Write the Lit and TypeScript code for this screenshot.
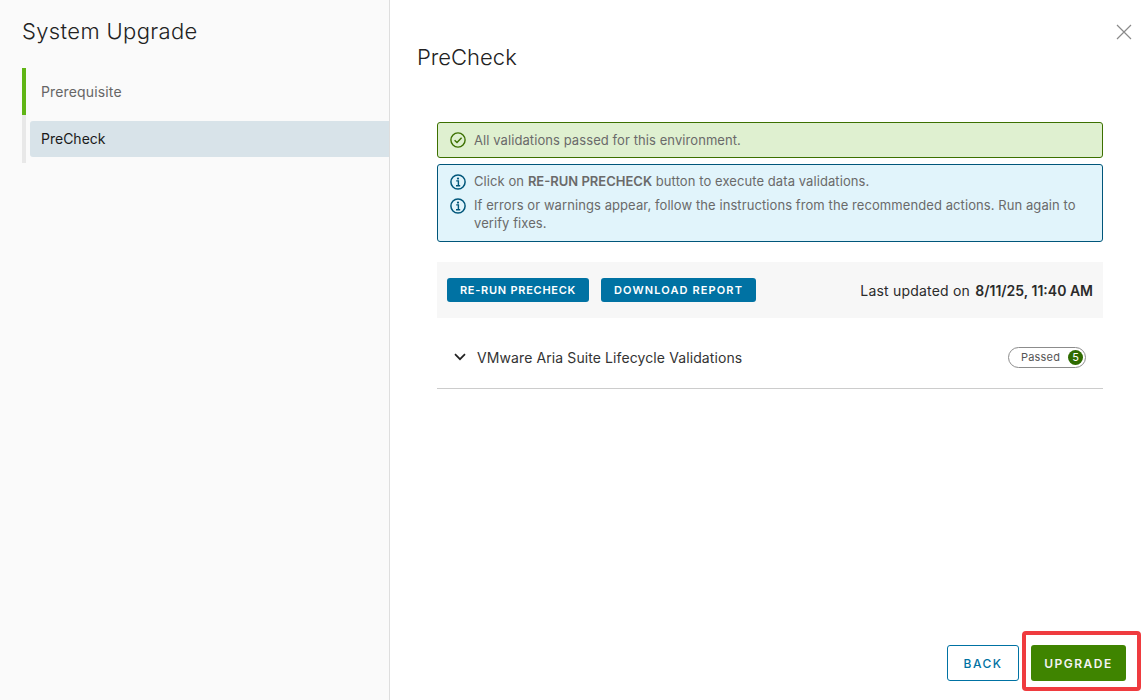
import { LitElement, html, css, svg } from "lit";
import { customElement } from "lit/decorators.js";

const infoIcon = svg`<svg class="ico" viewBox="0 0 16 16" width="16" height="16" fill="none"><circle cx="8" cy="8" r="7.1" stroke="#00567a" stroke-width="1.5"/><circle cx="8" cy="4.6" r="1.1" fill="#00567a"/><path d="M6.2 6.9H8.4V11.6M6 11.8H10.2" stroke="#00567a" stroke-width="1.4"/></svg>`;

@customElement("app-root")
export class AppRoot extends LitElement {
  static styles = css`
    :host {
      display: flex;
      width: 1148px;
      height: 700px;
      overflow: hidden;
      background: #fff;
      font-family: Inter, "Noto Sans", sans-serif;
      color: #2b2b2b;
    }
    .side {
      flex: none;
      box-sizing: border-box;
      background: #fafafa;
      border-right: 1px solid #dedede;
      width: 390px;
      padding: 19px 0 0 22px;
    }
    .side h2 {
      margin: 0;
      font-weight: 300;
      font-size: 22px;
      line-height: 25px;
      letter-spacing: 0.36px;
      color: #222;
    }
    .steps {
      margin-top: 24px;
      border-left: 4px solid #e8e8e8;
      height: 95px;
      position: relative;
    }
    .green {
      position: absolute;
      left: -4px;
      top: 0;
      width: 4px;
      height: 47px;
      background: #60b515;
    }
    .step {
      font-size: 14px;
      color: #666;
      padding-left: 15px;
      height: 47px;
      line-height: 47px;
      letter-spacing: 0.15px;
    }
    .step.active {
      margin: 6px 0 0 4px;
      height: 36px;
      line-height: 36px;
      padding-left: 11px;
      background: #d8e3e9;
      border-radius: 3px 0 0 3px;
      color: #1a1a1a;
      font-weight: 400;
      letter-spacing: 0;
    }
    .main {
      flex: 1;
      display: flex;
      flex-direction: column;
      padding: 0 22px 19px 27px;
      position: relative;
    }
    .close {
      position: absolute;
      top: 24px;
      right: 16px;
    }
    .main h1 {
      margin: 44px 0 0;
      font-weight: 300;
      font-size: 22px;
      line-height: 27px;
      color: #222;
    }
    .content {
      margin: 51px 0 0 20px;
      width: 666px;
      flex: 1;
    }
    .alert {
      box-sizing: border-box;
      border-radius: 3px;
      border: 1px solid;
      font-size: 13px;
      color: #6a6a6a;
      padding: 0 12px;
      letter-spacing: 0.08px;
    }
    .alert.ok {
      height: 36px;
      background: #dff0d0;
      border-color: #3c7000;
      display: flex;
      align-items: center;
      gap: 8px;
    }
    .alert.info {
      margin-top: 6px;
      height: 78px;
      background: #e1f4fb;
      border-color: #00567a;
      padding-top: 7px;
    }
    .line {
      display: flex;
      gap: 8px;
      line-height: 18px;
      margin-bottom: 6px;
    }
    .ico {
      flex: none;
    }
    .line .ico {
      margin-top: 2px;
    }
    .alert b {
      font-weight: 600;
      letter-spacing: 0;
    }
    .toolbar {
      margin-top: 20px;
      height: 56px;
      background: #f7f7f7;
      display: flex;
      align-items: center;
      padding: 0 10px;
      gap: 12px;
    }
    .btn {
      border: 1px solid transparent;
      border-radius: 3px;
      font-family: inherit;
      font-weight: 600;
      padding: 0;
      box-sizing: border-box;
    }
    .btn.sm {
      height: 24px;
      background: #0072a3;
      color: #fff;
      font-size: 11px;
      letter-spacing: 0.73px;
    }
    .btn.rerun {
      width: 142px;
    }
    .btn.download {
      width: 155px;
      letter-spacing: 1.12px;
    }
    .updated {
      margin-left: auto;
      font-size: 14px;
      color: #2b2b2b;
      letter-spacing: 0.2px;
    }
    .updated b {
      font-weight: 600;
      letter-spacing: 0;
      margin-left: 1px;
    }
    .row {
      height: 71px;
      box-sizing: border-box;
      border-bottom: 1px solid #ccc;
      display: flex;
      align-items: center;
      padding: 18px 17px 10px 17px;
      font-size: 14px;
      gap: 11px;
      color: #333;
    }
    .label {
      letter-spacing: 0.1px;
    }
    .badge {
      margin-left: auto;
      box-sizing: border-box;
      height: 21px;
      width: 78px;
      border: 1px solid #8c8c8c;
      border-radius: 11px;
      display: flex;
      align-items: center;
      justify-content: space-between;
      padding: 0 2px 0 12px;
      font-size: 11px;
      letter-spacing: 0.2px;
      color: #555;
    }
    .count {
      width: 15px;
      height: 15px;
      border-radius: 50%;
      background: #2f6b00;
      color: #fff;
      font-size: 11px;
      letter-spacing: 0;
      text-align: center;
      line-height: 15px;
    }
    .footer {
      display: flex;
      justify-content: flex-end;
      gap: 12px;
    }
    .btn.lg {
      height: 36px;
      font-size: 12px;
      letter-spacing: 1.5px;
      font-weight: 500;
    }
    .back {
      width: 72px;
      background: #fff;
      border-color: #0072a3;
      color: #0072a3;
    }
    .upgrade-wrap {
      position: relative;
      display: flex;
    }
    .btn.lg.upgrade {
      width: 95px;
      background: #3f8400;
      color: #f4f4f4;
      font-weight: 600;
    }
    .mark {
      position: absolute;
      left: -9px;
      right: -15px;
      top: -14px;
      bottom: -10px;
      border: 4px solid #ef3b3f;
      border-radius: 4px;
      pointer-events: none;
    }
  `;

  render() {
    return html`
      <aside class="side">
        <h2>System Upgrade</h2>
        <div class="steps">
          <div class="green"></div>
          <div class="step">Prerequisite</div>
          <div class="step active">PreCheck</div>
        </div>
      </aside>
      <main class="main">
        <svg class="close" width="16" height="16" viewBox="0 0 16 16" fill="none"><path d="M1 1L15 15M15 1L1 15" stroke="#8a8a8a" stroke-width="1.2"/></svg>
        <h1>PreCheck</h1>
        <div class="content">
          <div class="alert ok">
            <svg class="ico" viewBox="0 0 16 16" width="16" height="16" fill="none"><circle cx="8" cy="8" r="7.1" stroke="#3c7000" stroke-width="1.4"/><path d="M4.6 8.2L7 10.6L11.6 5.8" stroke="#3c7000" stroke-width="1.4"/></svg>
            <span>All validations passed for this environment.</span>
          </div>
          <div class="alert info">
            <div class="line">${infoIcon}<span>Click on <b>RE-RUN PRECHECK</b> button to execute data validations.</span></div>
            <div class="line">${infoIcon}<span>If errors or warnings appear, follow the instructions from the recommended actions. Run again to verify fixes.</span></div>
          </div>
          <div class="toolbar">
            <button class="btn sm rerun">RE-RUN PRECHECK</button>
            <button class="btn sm download">DOWNLOAD REPORT</button>
            <span class="updated">Last updated on <b>8/11/25, 11:40 AM</b></span>
          </div>
          <div class="row">
            <svg width="12" height="8" viewBox="0 0 12 8" fill="none"><path d="M1 1.2L6 6.2L11 1.2" stroke="#222" stroke-width="1.7"/></svg>
            <span class="label">VMware Aria Suite Lifecycle Validations</span>
            <span class="badge">Passed <span class="count">5</span></span>
          </div>
        </div>
        <div class="footer">
          <button class="btn lg back">BACK</button>
          <div class="upgrade-wrap">
            <button class="btn lg upgrade">UPGRADE</button>
            <div class="mark"></div>
          </div>
        </div>
      </main>
    `;
  }
}
